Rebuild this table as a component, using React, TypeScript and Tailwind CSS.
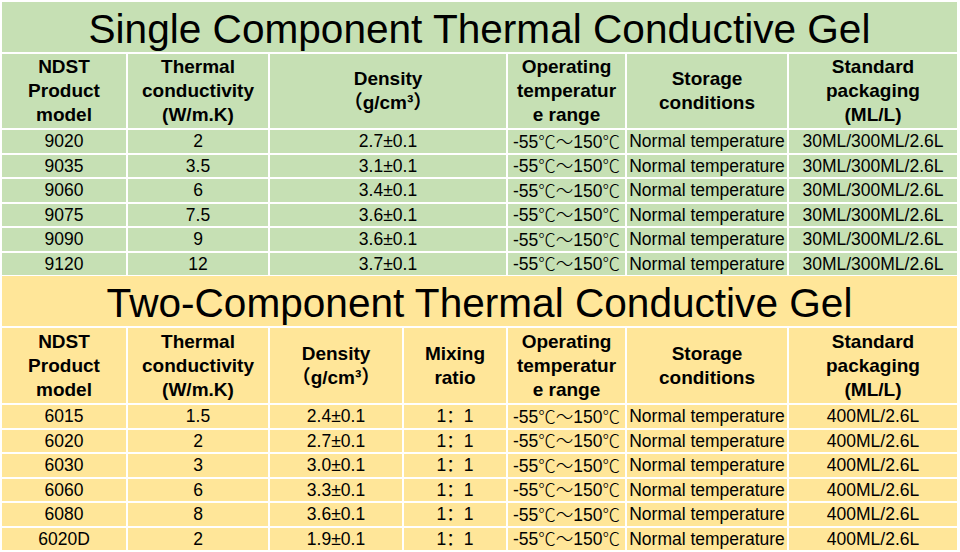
import React from "react";

const cellBase = "flex items-center justify-center text-center text-black";

type Props = {
  bg: string;
  title: string;
  cols: string;
  headers: React.ReactNode[];
  rows: React.ReactNode[][];
  titleH: string;
  headerH: string;
};

function Table({ bg, title, cols, headers, rows, titleH, headerH }: Props) {
  return (
    <div className={`grid gap-[2px] w-[955px] ${cols}`}>
      <div className={`${bg} ${titleH} col-span-full flex items-center justify-center pt-[4px] text-[40.6px] leading-[46px] text-black`}>
        {title}
      </div>
      {headers.map((h, i) => (
        <div key={i} className={`${bg} ${headerH} ${cellBase} text-[19px] leading-[24px] font-bold`}>
          <div>{h}</div>
        </div>
      ))}
      {rows.map((r, ri) =>
        r.map((c, ci) => (
          <div key={`${ri}-${ci}`} className={`${bg} h-[22.5px] ${cellBase} text-[17.5px] leading-[22px] whitespace-nowrap`}>
            {c}
          </div>
        ))
      )}
    </div>
  );
}

function Cjk({ children }: { children: React.ReactNode }) {
  return <span className="font-['Noto_Sans_CJK_SC',sans-serif] font-light">{children}</span>;
}

const temp = (
  <span>
    -55<Cjk>℃～</Cjk>150<Cjk>℃</Cjk>
  </span>
);
const norm = "Normal temperature";

export default function App() {
  const h1: React.ReactNode[] = [
    <>NDST<br />Product<br />model</>,
    <>Thermal<br />conductivity<br />(W/m.K)</>,
    <>Density<br />（g/cm³）</>,
    <>Operating<br />temperatur<br />e range</>,
    <>Storage<br />conditions</>,
    <>Standard<br />packaging<br />(ML/L)</>,
  ];
  const h2: React.ReactNode[] = [
    <>NDST<br />Product<br />model</>,
    <>Thermal<br />conductivity<br />(W/m.K)</>,
    <>Density<br />（g/cm³）</>,
    <>Mixing<br />ratio</>,
    <>Operating<br />temperatur<br />e range</>,
    <>Storage<br />conditions</>,
    <>Standard<br />packaging<br />(ML/L)</>,
  ];
  const p1 = "30ML/300ML/2.6L";
  const r1 = [
    ["9020", "2", "2.7±0.1", temp, norm, p1],
    ["9035", "3.5", "3.1±0.1", temp, norm, p1],
    ["9060", "6", "3.4±0.1", temp, norm, p1],
    ["9075", "7.5", "3.6±0.1", temp, norm, p1],
    ["9090", "9", "3.6±0.1", temp, norm, p1],
    ["9120", "12", "3.7±0.1", temp, norm, p1],
  ];
  const p2 = "400ML/2.6L";
  const m = "1：1";
  const r2 = [
    ["6015", "1.5", "2.4±0.1", m, temp, norm, p2],
    ["6020", "2", "2.7±0.1", m, temp, norm, p2],
    ["6030", "3", "3.0±0.1", m, temp, norm, p2],
    ["6060", "6", "3.3±0.1", m, temp, norm, p2],
    ["6080", "8", "3.6±0.1", m, temp, norm, p2],
    ["6020D", "2", "1.9±0.1", m, temp, norm, p2],
  ];
  return (
    <div className="w-[960px] h-[552px] overflow-hidden bg-white pl-[2px] pt-[2px] flex flex-col gap-[1px] font-['Liberation_Sans','Noto_Sans_CJK_SC',sans-serif]">
      <Table
        bg="bg-[#c6e0b4]"
        title="Single Component Thermal Conductive Gel"
        cols="grid-cols-[124px_140px_236px_117px_160px_168px]"
        headers={h1}
        rows={r1}
        titleH="h-[50px]"
        headerH="h-[74px]"
      />
      <Table
        bg="bg-[#ffe699]"
        title="Two-Component Thermal Conductive Gel"
        cols="grid-cols-[124px_140px_132px_102px_117px_160px_168px]"
        headers={h2}
        rows={r2}
        titleH="h-[50px]"
        headerH="h-[75px]"
      />
    </div>
  );
}
